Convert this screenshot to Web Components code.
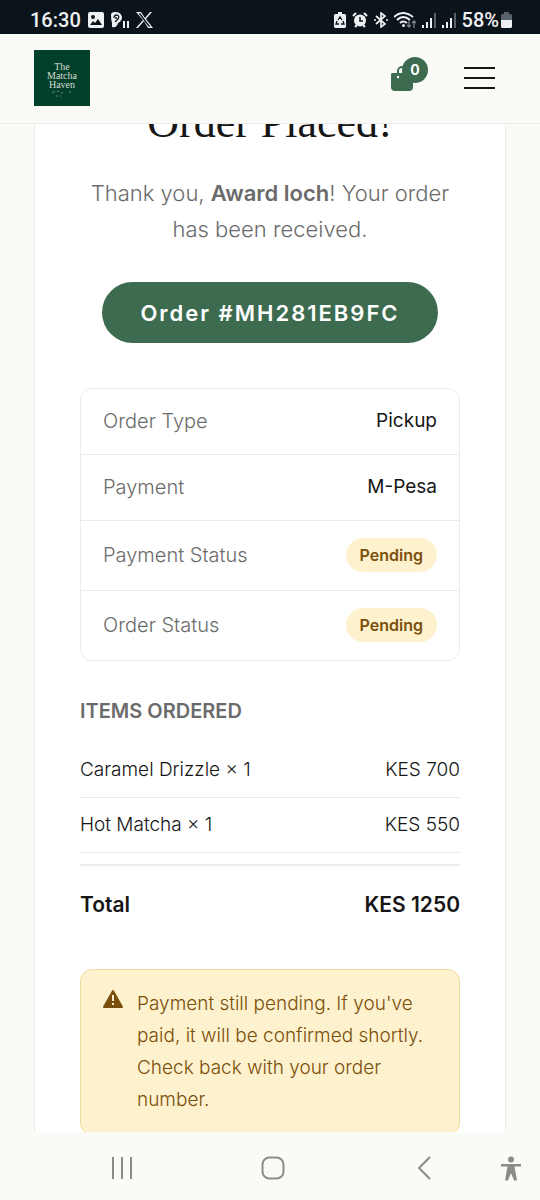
<!DOCTYPE html>
<html lang="en">
<head>
<meta charset="utf-8">
<meta name="viewport" content="width=device-width, initial-scale=1">
<title>The Matcha Haven – Order Placed</title>
<style>
  html, body { margin: 0; height: 100%; }
  body {
    --green: #3d6b4f;
    --cream: #fafaf6;
    --ink: #161616;
    --muted: #6b6b6b;
    --line: #ebebeb;
    --amber: #7a4f0b;
    --amber-bg: #fef1cd;
    background: var(--cream);
    color: var(--ink);
    font: 300 19px/30px Inter, "Open Sans", sans-serif;
  }
</style>
</head>
<body>
<phone-screen>
  <status-bar slot="top"></status-bar>
  <site-header slot="top"></site-header>
  <order-card>
    <order-message name="Award loch"></order-message>
    <order-number>Order #MH281EB9FC</order-number>
    <detail-list>
      <detail-row label="Order Type">Pickup</detail-row>
      <detail-row label="Payment">M-Pesa</detail-row>
      <detail-row label="Payment Status"><status-pill>Pending</status-pill></detail-row>
      <detail-row label="Order Status"><status-pill>Pending</status-pill></detail-row>
    </detail-list>
    <order-items></order-items>
    <notice-box>Payment still pending. If you've paid, it will be confirmed shortly. Check back with your order number.</notice-box>
  </order-card>
  <nav-bar slot="bottom"></nav-bar>
</phone-screen>

<script>
function define(name, html) {
  const template = document.createElement('template');
  template.innerHTML = html;
  customElements.define(name, class extends HTMLElement {
    constructor() {
      super();
      this.attachShadow({ mode: 'open' }).append(template.content.cloneNode(true));
    }
    connectedCallback() {
      this.shadowRoot.querySelectorAll('[data-attr]').forEach(el => {
        el.textContent = this.getAttribute(el.dataset.attr);
      });
    }
  });
}

define('phone-screen', `
<style>
  :host { display: flex; flex-direction: column; height: 100vh; }
  main { flex: 1; min-height: 0; overflow: hidden; padding: 0 34px; }
</style>
<slot name="top"></slot>
<main><slot></slot></main>
<slot name="bottom"></slot>`);

define('status-bar', `
<style>
  :host { display: flex; align-items: center; justify-content: space-between; height: 34px; box-sizing: border-box;
    padding: 6px 28px 0 30px; background: #0c141b; color: #eef1f3; font: 500 20px/24px Roboto, sans-serif; }
  div { display: flex; align-items: center; gap: 7px; }
  svg { display: block; fill: currentColor; }
  .right { gap: 6px; }
  .charge { display: flex; align-items: center; gap: 2px; }
</style>
<div>
  <span>16:30</span>
  <svg width="16" height="16" viewBox="0 0 16 16"><path fill-rule="evenodd" d="M2 0h12a2 2 0 0 1 2 2v12a2 2 0 0 1-2 2H2a2 2 0 0 1-2-2V2a2 2 0 0 1 2-2ZM2 13h12l-4-6-3 4-2-2-3 4ZM5 3a2 2 0 1 0 0 4 2 2 0 0 0 0-4Z"/></svg>
  <svg width="18" height="17" viewBox="0 0 18 17"><path d="M0 3Q0 0 4 0q6 0 7 5 0 4-4 6-1 5-6 4V11Q0 8 0 3Z"/><path d="M3 6q0-3 3-3 3 1 1 4l-3 3M4 6h2" fill="none" stroke="#0c141b" stroke-width="1.3"/><path d="M12 9h2v7h-2zM16 9h2v7h-2z"/></svg>
  <svg width="17" height="16" viewBox="0 0 17 16"><path fill-rule="evenodd" d="M0 0h5l4 6 5-6h2l-6 7 7 9h-5L8 9l-6 7H0l7-8ZM2.500 1.200 12.700 14.800H14.500L4.300 1.200Z"/></svg>
</div>
<div class="right">
  <svg width="12" height="16" viewBox="0 0 12 16"><path d="M4 0h4v2h3l1 1v12l-1 1H1l-1-1V3l1-1h3z"/><path d="M4 8l2-3 2 3M9 9l1 3H7M5 12H2l1-3" fill="none" stroke="#0c141b" stroke-width="1.300"/></svg>
  <svg width="16" height="16" viewBox="0 0 16 16"><circle cx="8" cy="8.500" r="6"/><path d="M1 4l3-3M15 4l-3-3M3 15l2-2M13 15l-2-2" stroke="currentColor" stroke-width="2"/><path d="M8 5v4h3" fill="none" stroke="#0c141b" stroke-width="1.500"/></svg>
  <svg width="14" height="16" viewBox="0 0 14 16"><path d="M2 4l9 8-4 3V1l4 3-9 8M0 8h2M12 8h2" fill="none" stroke="currentColor" stroke-width="1.700"/></svg>
  <svg width="22" height="17" viewBox="0 0 22 17"><path d="M0 5q9-8 19 0M3 8q6-6 13 0M6 11q3-3 7 0" fill="none" stroke="currentColor" stroke-width="2"/><circle cx="9.500" cy="13.500" r="1.500"/><path d="M15 8v7m-2-2 2 2 2-2M20 16V9m-2 2 2-2 2 2" fill="none" stroke="#77808a" stroke-width="1.300"/></svg>
  <svg width="14" height="15" viewBox="0 0 14 15"><path d="M0 12h2v3H0zM4 9h2v6H4zM8 5h2v10H8z"/><path d="M12 0h2v15h-2z" fill="#59626a"/></svg>
  <svg width="14" height="15" viewBox="0 0 14 15"><path d="M0 12h2v3H0zM4 9h2v6H4zM8 5h2v10H8z"/><path d="M12 0h2v15h-2z" fill="#59626a"/></svg>
  <span class="charge">58%
    <svg width="11" height="16" viewBox="0 0 11 16"><path d="M3 0h5v2h2l1 1v5H0V3l1-1h2z" fill="#59626a"/><path d="M0 8h11v7l-1 1H1l-1-1z"/></svg>
  </span>
</div>`);

define('site-header', `
<style>
  :host { display: flex; align-items: center; justify-content: space-between; height: 90px; box-sizing: border-box;
    padding: 0 45px 2px 34px; background: var(--cream); border-bottom: 1px solid #ebebe8; }
  .logo { display: flex; width: 56px; height: 56px; flex-direction: column; align-items: center; box-sizing: border-box; padding-top: 12px;
    background: #03402b; color: #d3ddd0; font: 10px/9px "Liberation Serif", serif; text-decoration: none; text-align: center; }
  .logo svg { margin-top: 1px; }
  .actions { display: flex; align-items: center; gap: 36px; }
  button { border: 0; padding: 0; background: none; display: block; cursor: pointer; }
  .cart { position: relative; width: 37px; height: 42px; color: var(--green); }
  .cart svg { position: absolute; left: 0; bottom: 8px; }
  .count { position: absolute; right: 0; top: 0; width: 26px; height: 26px; border-radius: 50%; background: var(--green);
    color: #fff; font: 700 14px/25px Inter, sans-serif; text-align: center; }
  .menu { width: 31px; display: flex; flex-direction: column; gap: 8px; }
  .menu i { height: 2px; background: var(--ink); }
</style>
<a class="logo" href="#" aria-label="The Matcha Haven home"><span>The</span><span>Matcha</span><span>Haven</span>
  <svg width="22" height="8" viewBox="0 0 22 8" fill="none" stroke="#6c8b73"><path d="M1 3l3-2M6 2l2-1M10 3h2M18 2h2M5 6h2M9 6h1"/></svg></a>
<div class="actions">
  <button class="cart" aria-label="Cart">
    <svg width="22" height="26" viewBox="0 0 22 26"><path d="M7 10V6a4 4 0 0 1 8 0v4" fill="none" stroke="currentColor" stroke-width="2"/><path d="M1 8h20l1 1v13a4 4 0 0 1-4 4H4a4 4 0 0 1-4-4V9z" fill="currentColor"/><circle cx="7" cy="12" r="1.200" fill="#fff"/></svg>
    <span class="count">0</span>
  </button>
  <button class="menu" aria-label="Menu"><i></i><i></i><i></i></button>
</div>`);

/* The card sits partly scrolled under the header, hence the negative start. */
define('order-card', `
<style>
  :host { display: block; margin-top: -29px; padding: 0 45px 45px; background: #fff; border: 1px solid var(--line); }
</style>
<slot></slot>`);

define('order-message', `
<style>
  :host { display: block; text-align: center; color: var(--muted); }
  h1 { margin: 0 0 25px; color: var(--ink); font: 400 44px/54px "Liberation Serif", serif; }
  p { margin: 0; font-size: 22px; line-height: 36px; }
  strong { font-weight: 600; }
</style>
<h1>Order Placed!</h1>
<p>Thank you, <strong data-attr="name"></strong>! Your order has been received.</p>`);

define('order-number', `
<style>
  :host { display: flex; justify-content: center; margin: 35px 0 45px; }
  span { padding: 16px 38px 15px; border-radius: 31px; background: var(--green); color: #fff;
    font-size: 22px; font-weight: 600; line-height: 30px; letter-spacing: 2px; white-space: nowrap; }
</style>
<span><slot></slot></span>`);

define('detail-list', `
<style>
  :host { display: block; border: 1px solid var(--line); border-radius: 12px; }
</style>
<slot></slot>`);

define('detail-row', `
<style>
  :host { display: flex; align-items: center; justify-content: space-between; padding: 17px 22px 18px; border-bottom: 1px solid var(--line); }
  :host(:last-child) { border-bottom: 0; }
  .label { color: var(--muted); font-size: 20px; }
  .value { font-weight: 400; }
</style>
<span class="label" data-attr="label"></span><span class="value"><slot></slot></span>`);

define('status-pill', `
<style>
  :host { display: block; padding: 2px 14px; border-radius: 17px; background: var(--amber-bg); color: var(--amber);
    font-size: 16px; font-weight: 600; line-height: 30px; }
</style>
<slot></slot>`);

define('order-items', `
<style>
  :host { display: block; margin: 35px 0 49px; }
  h2 { margin: 0 0 17px; color: var(--muted); font-size: 20px; font-weight: 600; line-height: 30px; }
  table { width: 100%; border-collapse: separate; border-spacing: 0; }
  th, td { padding: 12px 0; border-bottom: 1px solid var(--line); font-weight: 300; text-align: left; }
  td { text-align: right; }
  .gap td { height: 11px; padding: 0; border: 0; }
  tfoot th, tfoot td { border-bottom: 0; border-top: 2px solid var(--line); padding: 24px 0 0; font-size: 21px; font-weight: 600; }
</style>
<h2>ITEMS ORDERED</h2>
<table>
  <tbody>
    <tr><th scope="row">Caramel Drizzle × 1</th><td>KES 700</td></tr>
    <tr><th scope="row">Hot Matcha × 1</th><td>KES 550</td></tr>
    <tr class="gap"><td colspan="2"></td></tr>
  </tbody>
  <tfoot><tr><th scope="row">Total</th><td>KES 1250</td></tr></tfoot>
</table>`);

define('notice-box', `
<style>
  :host { display: flex; gap: 14px; padding: 18px 22px; border: 1px solid #efdc9c; border-radius: 12px; background: var(--amber-bg);
    color: var(--amber); line-height: 32px; }
  svg { flex: none; margin-top: 2px; }
</style>
<svg width="20" height="18" viewBox="0 0 20 18" aria-hidden="true"><path fill="currentColor" stroke="currentColor" stroke-width="2" stroke-linejoin="round" d="M10 1 19 17H1z"/><path stroke="#fef1cd" stroke-width="2" d="M10 5v6M10 13v2"/></svg>
<span><slot></slot></span>`);

define('nav-bar', `
<style>
  :host { display: grid; grid-template-columns: 116px 1fr 116px 58px; align-items: center; height: 68px; background: var(--cream); color: #8b8c89; padding: 4px 0 0 64px; box-sizing: border-box; }
  button { display: flex; justify-content: center; border: 0; padding: 0; background: none; color: inherit; }
  svg { fill: none; stroke: currentColor; stroke-width: 2; }
</style>
<button aria-label="Recent apps"><svg width="22" height="24" viewBox="0 0 22 24"><path d="M2 1v22M11 1v22M20 1v22"/></svg></button>
<button aria-label="Home"><svg width="24" height="24" viewBox="0 0 24 24"><rect x="1.500" y="1.500" width="21" height="21" rx="7"/></svg></button>
<button aria-label="Back"><svg width="14" height="24" viewBox="0 0 14 24"><path d="M13 1 2 12l11 11"/></svg></button>
<button aria-label="Accessibility"><svg width="20" height="25" viewBox="0 0 20 25"><circle cx="10" cy="3.500" r="3" fill="currentColor" stroke="none"/><path d="M0 8h20v2.500h-6.500l2.500 14h-3L10 17l-3 7.500H4l2.500-14H0z" fill="currentColor" stroke="none"/></svg></button>`);
</script>
</body>
</html>
